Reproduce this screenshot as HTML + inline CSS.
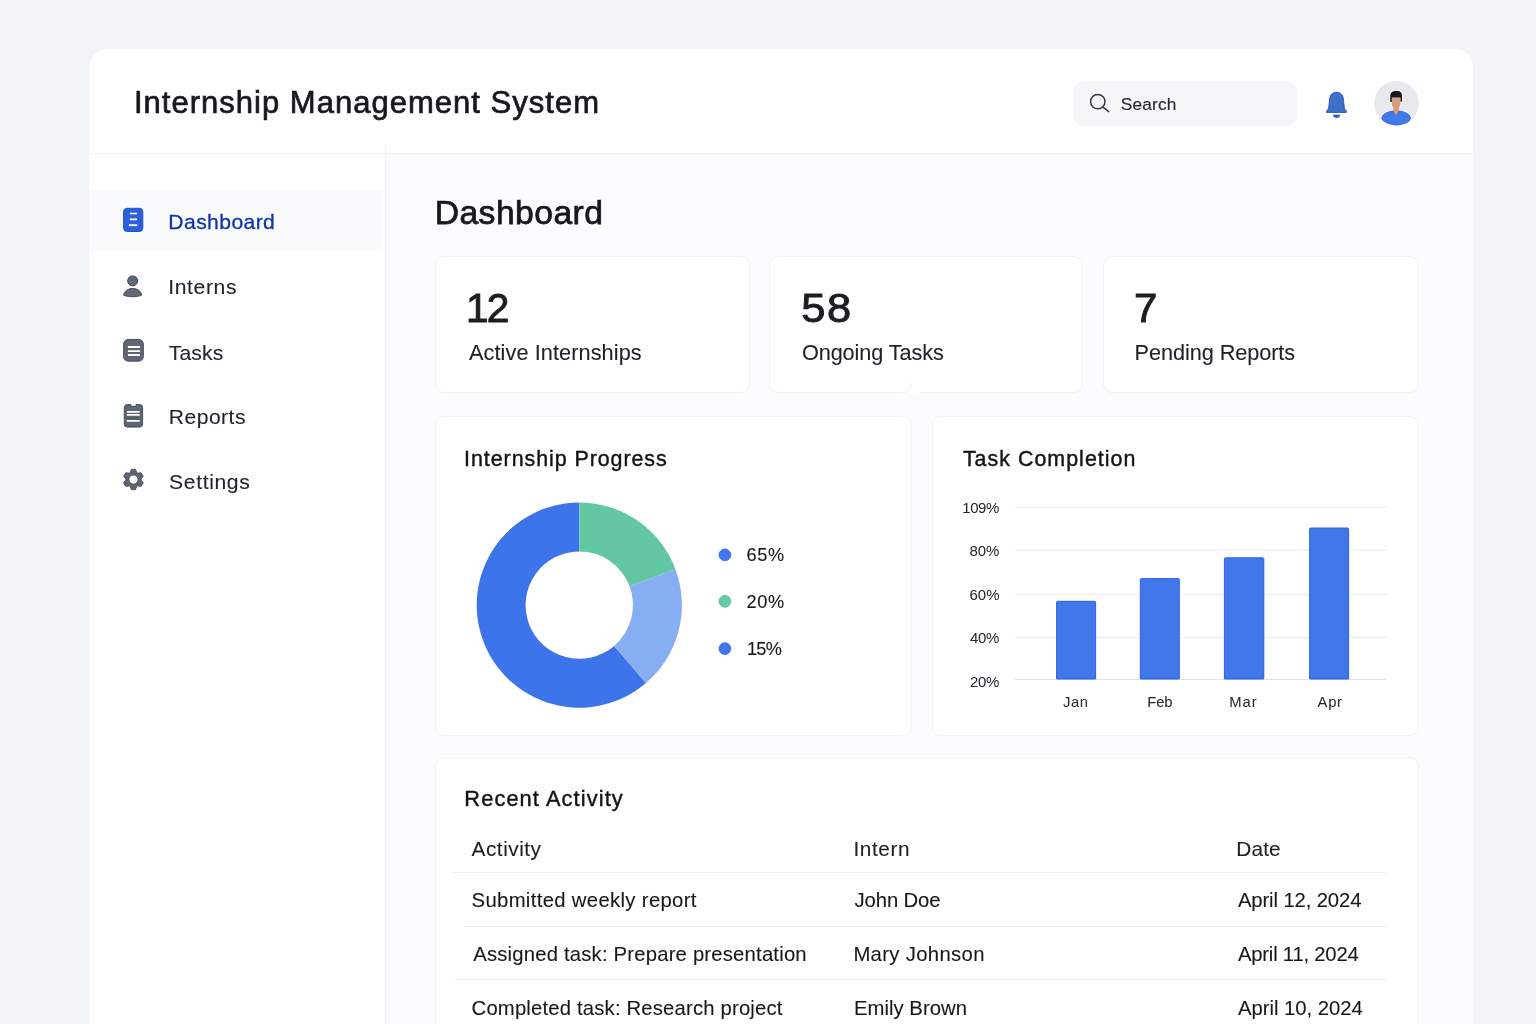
<!DOCTYPE html>
<html lang="en">
<head>
<meta charset="utf-8">
<title>Internship Management System</title>
<style>
*{box-sizing:border-box;margin:0;padding:0}
html,body{width:1536px;height:1024px;overflow:hidden}
body{background:#f2f5f8;font-family:"Liberation Sans",sans-serif;position:relative}
.app{position:absolute;left:89px;top:49px;width:1384px;height:1000px;background:#fefefe;border-radius:18px 18px 0 0;overflow:hidden}
.main{position:absolute;left:297px;top:105px;width:1087px;height:900px;background:#fbfcfd}
.hline{position:absolute;left:0;top:104px;width:1384px;height:1px;background:#f0f2f6}
.vline{position:absolute;left:296px;top:95px;width:1px;height:920px;background:#f0f2f6}
.navact{position:absolute;left:0;top:141px;width:294px;height:60.5px;background:#f9fafc}
.card{position:absolute;background:#fefefe;border:1px solid #f1f3f7;border-radius:9px}
.t{position:absolute;white-space:nowrap;line-height:1;-webkit-font-smoothing:antialiased}
.search{position:absolute;left:1073px;top:81px;width:223.5px;height:44.5px;border-radius:12px;background:#f5f6f8}
.row{position:absolute;height:1px;background:#eef0f4}
svg{position:absolute;left:0;top:0;overflow:visible}
</style>
</head>
<body>
<div class="app">
  <div class="main"></div>
  <div class="hline"></div>
  <div class="vline"></div>
  <div class="navact"></div>
</div>

<!-- cards -->
<div class="card" style="left:434.5px;top:256px;width:315px;height:136.5px"></div>
<div class="card" style="left:769px;top:256px;width:314px;height:136.5px"></div>
<div class="card" style="left:1103px;top:256px;width:316px;height:136.5px"></div>
<div class="card" style="left:434.5px;top:416px;width:477.5px;height:319.5px"></div>
<div class="card" style="left:932px;top:416px;width:487px;height:319.5px"></div>
<div class="card" style="left:434.5px;top:757px;width:984.5px;height:300px"></div>

<div style="position:absolute;left:904px;top:391px;width:16px;height:3px;background:#fefefe"></div>
<div style="position:absolute;left:896px;top:383px;width:16.2px;height:10px;border-right:1px solid #f1f3f7;border-bottom:1px solid #f3f4f8;border-bottom-right-radius:8px"></div>
<div class="search"></div>

<!-- table rules -->
<div class="row" style="left:453px;top:871.5px;width:933px"></div>
<div class="row" style="left:464px;top:926px;width:922px"></div>
<div class="row" style="left:455px;top:979px;width:931px"></div>

<svg width="1536" height="1024" viewBox="0 0 1536 1024">
  <!-- search icon -->
  <circle cx="1097.8" cy="101.6" r="7.2" fill="none" stroke="#2d3a4d" stroke-width="1.5"/>
  <path d="M1103.1 107.2L1108.6 111.6" stroke="#2d3a4d" stroke-width="1.5" stroke-linecap="round"/>

  <!-- bell -->
  <path d="M1336.5 92.3C1332.7 92.3 1329.9 94.9 1329.7 98.8L1328.6 108.5L1326.5 111.3V112.4H1346.5V111.3L1344.4 108.5L1343.3 98.8C1343.1 94.9 1340.300 92.3 1336.500 92.300Z" fill="#4070c6" stroke="#2151c2" stroke-width="0.9" stroke-linejoin="round"/>
  <path d="M1333.2 114.900H1340C1339.800 116.600 1338.700 117.700 1336.600 117.700C1334.500 117.700 1333.400 116.600 1333.200 114.900Z" fill="#2f60c6" stroke="#2858c4" stroke-width="0.5" stroke-linejoin="round"/>

  <!-- avatar -->
  <defs><clipPath id="av"><circle cx="1396.5" cy="103.3" r="22.2"/></clipPath></defs>
  <circle cx="1396.5" cy="103.3" r="22.2" fill="#e8e9ee"/>
  <g clip-path="url(#av)">
    <path d="M1390.2 102V96.200C1390.2 93 1392.2 90.900 1395.2 90.900H1397.600C1400.400 90.900 1402 92.900 1402 95.600V102L1400.500 104.500C1400.500 106.800 1398.800 108.700 1396.200 108.700C1393.600 108.700 1391.800 106.800 1391.800 104.500Z" fill="#fff" stroke="#fff" stroke-width="1.8" stroke-linejoin="round"/>
    <ellipse cx="1396.15" cy="118.1" rx="14.6" ry="7.600" fill="#fbfaf2" stroke="#fbfaf2" stroke-width="2.2"/>
    <path d="M1393.600 106.500H1398.700L1398.500 111.600L1396.050 115.700L1393.700 111.600Z" fill="#e3975a"/>
    <ellipse cx="1396.15" cy="118.1" rx="14.3" ry="7.300" fill="#4079e8" stroke="#2a66e8" stroke-width="0.9"/>
    <path d="M1393.600 106.500H1398.700L1398.500 111.400L1396.050 115.300L1393.700 111.400Z" fill="#e3975a"/>
    <path d="M1391.800 97.400H1400.500V104.300C1400.500 106.800 1398.800 108.700 1396.200 108.700C1393.600 108.700 1391.800 106.800 1391.800 104.300Z" fill="#d69d80"/>
    <path d="M1390.200 102V96.200C1390.200 93 1392.200 90.900 1395.200 90.900H1397.600C1400.400 90.900 1402 92.900 1402 95.600V102L1400.500 101.600V97.600H1391.800V102Z" fill="#1a1a1c"/>
  </g>

  <!-- nav icons -->
  <rect x="123.100" y="207.800" width="20.200" height="24.200" rx="4.200" fill="#fdfdfe"/>
  <rect x="123.600" y="208.300" width="19.200" height="23.200" rx="3.600" fill="#2d5fda" stroke="#1d50d3" stroke-width="1"/>
  <path d="M129.900 213.500h7.200M129.900 219.300h7.200" stroke="#fff" stroke-width="1.700"/>
  <path d="M128.900 225.200h8.400" stroke="#fff" stroke-width="1.800"/>

  <circle cx="132.650" cy="280.900" r="5" fill="#606876" stroke="#363c4a" stroke-width="0.9"/>
  <path d="M123.600 295.100C124.300 291 127.900 288.500 132.650 288.500C137.400 288.500 141 291 141.700 295.100C139 296.400 135.800 296.700 132.650 296.700C129.500 296.700 126.300 296.400 123.600 295.100Z" fill="#606876" stroke="#363c4a" stroke-width="0.9" stroke-linejoin="round"/>

  <rect x="123.600" y="339.450" width="19.750" height="21.750" rx="4.600" fill="#5f6572" stroke="#3f4551" stroke-width="0.9"/>
  <path d="M127.900 346.950h12.100M127.900 351.100h12.100M127.900 354.950h12.100" stroke="#fff" stroke-width="1.850"/>

  <path d="M127.300 404.550h3.500v1.700h5.300v-1.700h3.500a3 3 0 0 1 3 3v16.500a3 3 0 0 1 -3 3h-12.300a3 3 0 0 1 -3 -3v-16.500a3 3 0 0 1 3 -3z" fill="#5f6572" stroke="#3f4551" stroke-width="0.900" stroke-linejoin="round"/>
  <path d="M126.900 411.850h12.800M126.900 414.950h12.800M126.900 420.950h12.800" stroke="#fff" stroke-width="1.800"/>
  <path d="M126.900 418h12.800" stroke="#4a505c" stroke-width="0.800"/>

  <!-- gear -->
  <g transform="translate(133.45 479.55)">
    <path id="gear" fill="#5f6572" stroke="#444a55" stroke-width="0.9" stroke-linejoin="round" fill-rule="evenodd" d="M-3.25 -6.98L-2.12 -9.98A10.2 10.2 0 0 1 2.12 -9.98L3.25 -6.98A7.7 7.7 0 0 1 4.42 -6.31L7.58 -6.83A10.2 10.2 0 0 1 9.70 -3.15L7.67 -0.67A7.7 7.7 0 0 1 7.67 0.67L9.70 3.15A10.2 10.2 0 0 1 7.58 6.83L4.42 6.31A7.7 7.7 0 0 1 3.25 6.98L2.12 9.98A10.2 10.2 0 0 1 -2.12 9.98L-3.25 6.98A7.7 7.7 0 0 1 -4.42 6.31L-7.58 6.83A10.2 10.2 0 0 1 -9.70 3.15L-7.67 0.67A7.7 7.7 0 0 1 -7.67 -0.67L-9.70 -3.15A10.2 10.2 0 0 1 -7.58 -6.83L-4.42 -6.31A7.7 7.7 0 0 1 -3.25 -6.98ZM0 -4.6A4.6 4.6 0 1 0 0 4.6A4.6 4.6 0 1 0 0 -4.6Z"/>
  </g>

  <!-- donut -->
  <path d="M645.93 683.12A102.6 102.6 0 1 1 579.30 502.50L579.30 551.40A53.7 53.7 0 1 0 614.18 645.93Z" fill="#3e74ea"/>
  <path d="M579.30 502.50A102.6 102.6 0 0 1 675.40 569.17L629.60 586.29A53.7 53.7 0 0 0 579.30 551.40Z" fill="#64c7a4"/>
  <path d="M675.40 569.17A102.6 102.6 0 0 1 645.93 683.12L614.18 645.93A53.7 53.7 0 0 0 629.60 586.29Z" fill="#87adf3"/>

  <!-- legend dots -->
  <circle cx="724.9" cy="554.9" r="5.900" fill="#4177e8" stroke="#2d65e8" stroke-width="0.800"/>
  <circle cx="724.9" cy="601.3" r="5.900" fill="#68c9a6" stroke="#55bf97" stroke-width="0.800"/>
  <circle cx="724.9" cy="648.600" r="5.900" fill="#4177e8" stroke="#2d65e8" stroke-width="0.800"/>

  <!-- grid -->
  <path d="M1015 507.400H1387M1015 550.300H1387M1015 594.400H1387M1015 637.400H1387" stroke="#e9ebf1" stroke-width="1"/>
  <path d="M1015 679.500H1387" stroke="#dfe2ea" stroke-width="1"/>
  <!-- bars -->
  <g fill="#4177e8" stroke="#2a63e8" stroke-width="1">
    <path d="M1056.600 679V602.300q0-1 1-1H1094.600q1 0 1 1V679Z"/>
    <path d="M1140.300 679V579.600q0-1 1-1H1178.300q1 0 1 1V679Z"/>
    <path d="M1224.400 679V558.800q0-1 1-1H1262.800q1 0 1 1V679Z"/>
    <path d="M1309.600 679V529q0-1 1-1H1347.600q1 0 1 1V679Z"/>
  </g>
</svg>

<div id="txt" style="position:absolute;left:0;top:0;width:1536px;height:1024px;will-change:transform">
<div class="t" style="left:133.94px;top:86.97px;font-size:31.0px;letter-spacing:1.014px;color:#16181c;-webkit-text-stroke:0.7px #16181c;">Internship Management System</div>
<div class="t" style="left:1120.78px;top:96.08px;font-size:17.3px;letter-spacing:0.183px;color:#222a35;-webkit-text-stroke:0.15px #222a35;">Search</div>
<div class="t" style="left:168.37px;top:210.94px;font-size:21.1px;letter-spacing:0.411px;color:#0f34a8;-webkit-text-stroke:0.3px #0f34a8;">Dashboard</div>
<div class="t" style="left:168.23px;top:276.14px;font-size:21.1px;letter-spacing:0.627px;color:#21252d;-webkit-text-stroke:0.1px #21252d;">Interns</div>
<div class="t" style="left:168.64px;top:341.94px;font-size:21.1px;letter-spacing:0.212px;color:#21252d;-webkit-text-stroke:0.1px #21252d;">Tasks</div>
<div class="t" style="left:168.83px;top:406.34px;font-size:21.1px;letter-spacing:0.461px;color:#21252d;-webkit-text-stroke:0.1px #21252d;">Reports</div>
<div class="t" style="left:169.11px;top:471.01px;font-size:21.1px;letter-spacing:0.630px;color:#21252d;-webkit-text-stroke:0.1px #21252d;">Settings</div>
<div class="t" style="left:434.66px;top:196.19px;font-size:33.7px;letter-spacing:0.443px;color:#16181c;-webkit-text-stroke:0.75px #16181c;">Dashboard</div>
<div class="t" style="left:466.04px;top:288.07px;font-size:40.7px;letter-spacing:-1.908px;color:#1b1d21;-webkit-text-stroke:0.9px #1b1d21;">12</div>
<div class="t" style="left:801.00px;top:288.07px;font-size:40.7px;letter-spacing:1.462px;color:#1b1d21;-webkit-text-stroke:0.9px #1b1d21;transform:scaleX(1.07);transform-origin:0 0;text-indent:0.243px;">58</div>
<div class="t" style="left:1133.00px;top:288.07px;font-size:40.7px;letter-spacing:0.000px;color:#1b1d21;-webkit-text-stroke:0.9px #1b1d21;transform:scaleX(1.03);transform-origin:0 0;text-indent:0.932px;">7</div>
<div class="t" style="left:468.95px;top:341.63px;font-size:21.7px;letter-spacing:0.093px;color:#1e2127;-webkit-text-stroke:0.1px #1e2127;">Active Internships</div>
<div class="t" style="left:801.95px;top:341.63px;font-size:21.7px;letter-spacing:-0.102px;color:#1e2127;-webkit-text-stroke:0.1px #1e2127;">Ongoing Tasks</div>
<div class="t" style="left:1134.57px;top:341.63px;font-size:21.7px;letter-spacing:-0.069px;color:#1e2127;-webkit-text-stroke:0.1px #1e2127;">Pending Reports</div>
<div class="t" style="left:464.09px;top:449.31px;font-size:21.4px;letter-spacing:0.952px;color:#111316;-webkit-text-stroke:0.4px #111316;">Internship Progress</div>
<div class="t" style="left:962.90px;top:449.31px;font-size:21.4px;letter-spacing:1.027px;color:#111316;-webkit-text-stroke:0.4px #111316;">Task Completion</div>
<div class="t" style="left:746.43px;top:545.75px;font-size:18.2px;letter-spacing:0.735px;color:#16181c;-webkit-text-stroke:0.1px #16181c;">65%</div>
<div class="t" style="left:746.45px;top:593.21px;font-size:18.2px;letter-spacing:0.715px;color:#16181c;-webkit-text-stroke:0.1px #16181c;">20%</div>
<div class="t" style="left:746.96px;top:640.39px;font-size:18.2px;letter-spacing:-0.765px;color:#16181c;-webkit-text-stroke:0.1px #16181c;">15%</div>
<div class="t" style="left:962.24px;top:500.40px;font-size:15.0px;letter-spacing:-0.446px;color:#22252b;">109%</div>
<div class="t" style="left:969.60px;top:543.10px;font-size:15.0px;letter-spacing:-0.172px;color:#22252b;">80%</div>
<div class="t" style="left:969.54px;top:587.40px;font-size:15.0px;letter-spacing:-0.042px;color:#22252b;">60%</div>
<div class="t" style="left:969.93px;top:630.19px;font-size:15.0px;letter-spacing:-0.257px;color:#22252b;">40%</div>
<div class="t" style="left:969.93px;top:673.50px;font-size:15.0px;letter-spacing:-0.242px;color:#22252b;">20%</div>
<div class="t" style="left:1063.00px;top:694.85px;font-size:14.8px;letter-spacing:0.616px;color:#22252b;">Jan</div>
<div class="t" style="left:1147.21px;top:694.85px;font-size:14.8px;letter-spacing:-0.109px;color:#22252b;">Feb</div>
<div class="t" style="left:1229.35px;top:694.85px;font-size:14.8px;letter-spacing:0.897px;color:#22252b;">Mar</div>
<div class="t" style="left:1317.53px;top:694.85px;font-size:14.8px;letter-spacing:0.751px;color:#22252b;">Apr</div>
<div class="t" style="left:464.34px;top:787.75px;font-size:21.8px;letter-spacing:1.101px;color:#111316;-webkit-text-stroke:0.4px #111316;">Recent Activity</div>
<div class="t" style="left:471.59px;top:838.79px;font-size:20.8px;letter-spacing:0.505px;color:#1c1f24;-webkit-text-stroke:0.1px #1c1f24;">Activity</div>
<div class="t" style="left:853.47px;top:838.79px;font-size:20.8px;letter-spacing:0.575px;color:#1c1f24;-webkit-text-stroke:0.1px #1c1f24;">Intern</div>
<div class="t" style="left:1236.30px;top:838.79px;font-size:20.8px;letter-spacing:0.146px;color:#1c1f24;-webkit-text-stroke:0.1px #1c1f24;">Date</div>
<div class="t" style="left:471.56px;top:890.12px;font-size:20.3px;letter-spacing:0.334px;color:#16181c;-webkit-text-stroke:0.1px #16181c;">Submitted weekly report</div>
<div class="t" style="left:854.61px;top:890.12px;font-size:20.3px;letter-spacing:-0.143px;color:#16181c;-webkit-text-stroke:0.1px #16181c;">John Doe</div>
<div class="t" style="left:1237.92px;top:890.12px;font-size:20.3px;letter-spacing:-0.123px;color:#16181c;-webkit-text-stroke:0.1px #16181c;">April 12, 2024</div>
<div class="t" style="left:473.19px;top:943.85px;font-size:20.3px;letter-spacing:0.191px;color:#16181c;-webkit-text-stroke:0.1px #16181c;">Assigned task: Prepare presentation</div>
<div class="t" style="left:853.39px;top:943.85px;font-size:20.3px;letter-spacing:0.334px;color:#16181c;-webkit-text-stroke:0.1px #16181c;">Mary Johnson</div>
<div class="t" style="left:1237.96px;top:943.85px;font-size:20.3px;letter-spacing:-0.221px;color:#16181c;-webkit-text-stroke:0.1px #16181c;">April 11, 2024</div>
<div class="t" style="left:471.57px;top:998.04px;font-size:20.3px;letter-spacing:0.173px;color:#16181c;-webkit-text-stroke:0.1px #16181c;">Completed task: Research project</div>
<div class="t" style="left:853.95px;top:998.04px;font-size:20.3px;letter-spacing:0.031px;color:#16181c;-webkit-text-stroke:0.1px #16181c;">Emily Brown</div>
<div class="t" style="left:1237.94px;top:998.04px;font-size:20.3px;letter-spacing:-0.015px;color:#16181c;-webkit-text-stroke:0.1px #16181c;">April 10, 2024</div>
</div>
</body>
</html>
